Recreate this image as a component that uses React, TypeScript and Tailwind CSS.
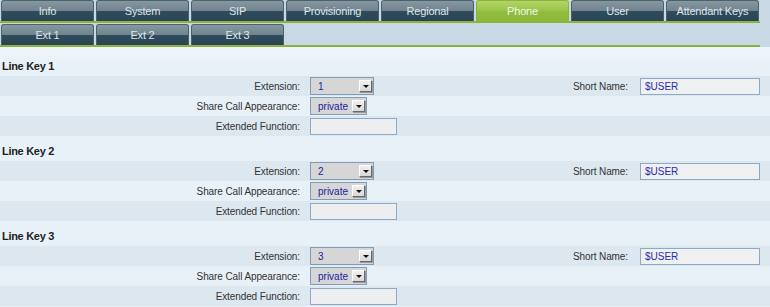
import React from "react";

const topTabs = ["Info", "System", "SIP", "Provisioning", "Regional", "Phone", "User", "Attendant Keys"];
const subTabs = ["Ext 1", "Ext 2", "Ext 3"];

function Tab({ label, active }: { label: string; active?: boolean }) {
  return (
    <div
      className={
        "w-[93px] h-[21px] rounded-t-[3px] flex items-start justify-center pt-[3px] text-[11px] tracking-[-0.2px] leading-[14px] border-x border-t " +
        (active
          ? "bg-[linear-gradient(to_bottom,#b2d565_0%,#9cc64a_45%,#90bd3d_55%,#8ab838_100%)] border-[#8db53e] text-[#f2f7e8]"
          : "bg-[linear-gradient(to_bottom,#8797a0_0%,#708490_48%,#2f4b5c_52%,#2a4454_100%)] border-[#4b616c] text-[#dfe6ea]")
      }
    >
      {label}
    </div>
  );
}

function Arrow() {
  return (
    <div className="w-[13px] h-[12px] bg-[linear-gradient(to_bottom,#f0f0f0,#d8d8d8)] border border-t-[#ffffff] border-l-[#ffffff] border-r-[#6a6a6a] border-b-[#6a6a6a] flex items-center justify-center shadow-[1px_1px_0_#9a9a9a]">
      <svg width="6" height="3" viewBox="0 0 6 3">
        <polygon points="0,0 6,0 3,3" fill="#111" />
      </svg>
    </div>
  );
}

function Select({ value, width }: { value: string; width: string }) {
  return (
    <div className={"h-[18px] bg-[#d6d6d6] border border-[#7f9db9] flex items-center justify-between pl-[7px] pr-[1px] " + width}>
      <span className="text-[10px] text-[#22229a]">{value}</span>
      <Arrow />
    </div>
  );
}

function Row({
  dark,
  label,
  children,
  label2,
  children2,
}: {
  dark?: boolean;
  label: string;
  children: React.ReactNode;
  label2?: string;
  children2?: React.ReactNode;
}) {
  return (
    <div className={"h-[20px] flex items-center " + (dark ? "bg-[#dce7f0]" : "bg-[#e9f1f8]")}>
      <div className="w-[300px] text-right text-[10px] tracking-[-0.1px] text-[#333]">{label}</div>
      <div className="ml-[10px] w-[220px] flex items-center">{children}</div>
      <div className="w-[98px] text-right text-[10px] tracking-[-0.1px] text-[#333]">{label2}</div>
      <div className="ml-[12px] flex items-center">{children2}</div>
    </div>
  );
}

function Block({ n }: { n: number }) {
  return (
    <div>
      <div className="h-[25px] flex items-end pb-[2px] pl-[2px] text-[11px] tracking-[-0.3px] font-bold text-[#222] leading-[16px]">
        Line Key {n}
      </div>
      <Row
        dark
        label="Extension:"
        label2="Short Name:"
        children2={
          <div className="w-[120px] h-[17px] bg-[#eef0f2] border border-[#8ea9c7] pl-[4px] flex items-center text-[10px] text-[#2b2bb0]">
            $USER
          </div>
        }
      >
        <Select value={String(n)} width="w-[64px]" />
      </Row>
      <Row label="Share Call Appearance:">
        <Select value="private" width="w-[57px]" />
      </Row>
      <Row dark label="Extended Function:">
        <div className="w-[87px] h-[17px] bg-[#eceef0] border border-[#8ea9c7]" />
      </Row>
    </div>
  );
}

export default function App() {
  return (
    <div className="w-[770px] h-[307px] overflow-hidden bg-[#e9f1f8] font-['Liberation_Sans',Arial,sans-serif]">
      <div className="bg-[#c8d8e5]">
        <div className="flex gap-[2px] pl-[1px]">
          {topTabs.map((t) => (
            <Tab key={t} label={t} active={t === "Phone"} />
          ))}
        </div>
        <div className="w-[760px] h-[2px] bg-[#8cb43c]" />
        <div className="flex gap-[2px] pl-[1px] pt-[1px]">
          {subTabs.map((t) => (
            <Tab key={t} label={t} />
          ))}
        </div>
        <div className="w-[760px] h-[2px] bg-[#8cb43c]" />
      </div>
      <div className="pt-[4px] bg-[linear-gradient(to_bottom,#eef4fa_0px,#e9f1f8_20px)]">
        <Block n={1} />
        <Block n={2} />
        <Block n={3} />
      </div>
    </div>
  );
}
